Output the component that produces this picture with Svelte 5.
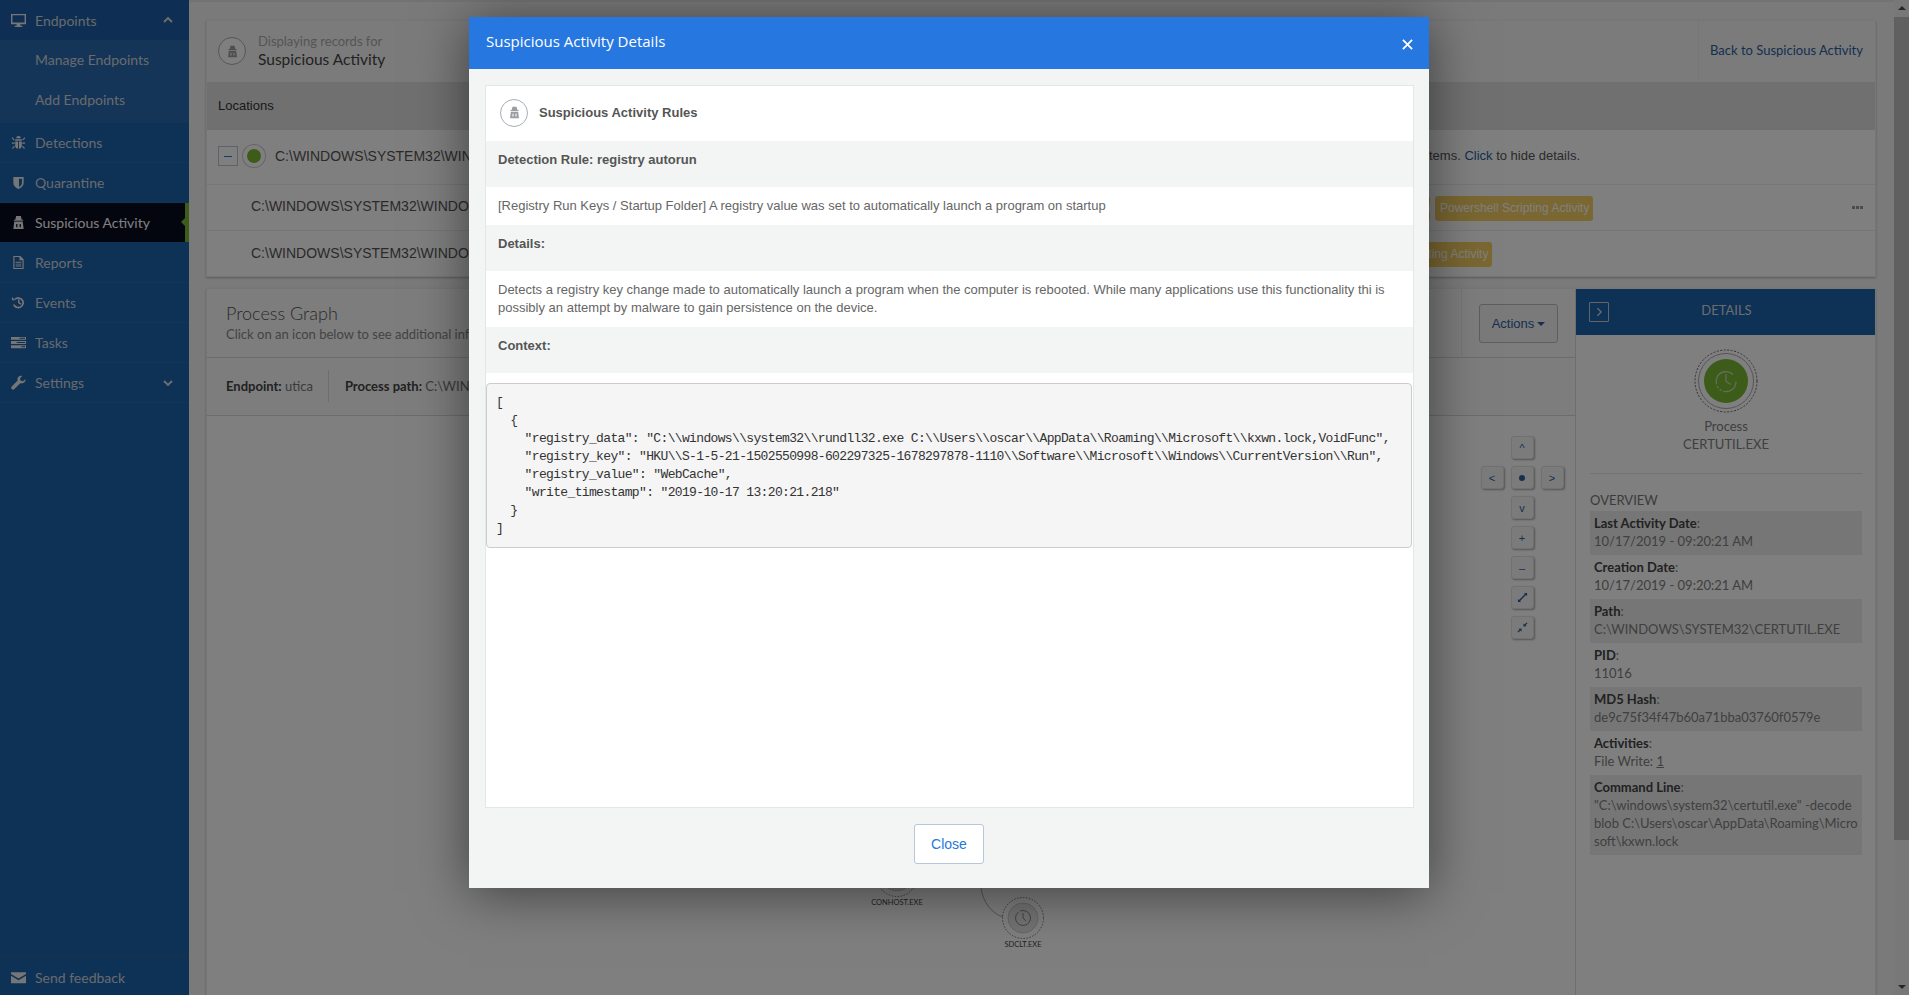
<script>
  const nav = [
    { label: 'Detections', icon: 'bug' },
    { label: 'Quarantine', icon: 'shield' },
    { label: 'Suspicious Activity', icon: 'spy', active: true },
    { label: 'Reports', icon: 'doc' },
    { label: 'Events', icon: 'history' },
    { label: 'Tasks', icon: 'tasks' },
    { label: 'Settings', icon: 'wrench', chevron: 'down' }
  ];

  const overview = [
    { label: 'Last Activity Date', value: '10/17/2019 - 09:20:21 AM' },
    { label: 'Creation Date', value: '10/17/2019 - 09:20:21 AM' },
    { label: 'Path', value: 'C:\\WINDOWS\\SYSTEM32\\CERTUTIL.EXE' },
    { label: 'PID', value: '11016' },
    { label: 'MD5 Hash', value: 'de9c75f34f47b60a71bba03760f0579e' },
    { label: 'Activities', value: 'File Write: ', count: '1' },
    { label: 'Command Line', value: '"C:\\windows\\system32\\certutil.exe" -decode blob C:\\Users\\oscar\\AppData\\Roaming\\Microsoft\\kxwn.lock' }
  ];

  const controls = [
    ['up'],
    ['left', 'center', 'right'],
    ['down'],
    ['plus'],
    ['minus'],
    ['expand'],
    ['compress']
  ];

  const context = `[
  {
    "registry_data": "C:\\\\windows\\\\system32\\\\rundll32.exe C:\\\\Users\\\\oscar\\\\AppData\\\\Roaming\\\\Microsoft\\\\kxwn.lock,VoidFunc",
    "registry_key": "HKU\\\\S-1-5-21-1502550998-602297325-1678297878-1110\\\\Software\\\\Microsoft\\\\Windows\\\\CurrentVersion\\\\Run",
    "registry_value": "WebCache",
    "write_timestamp": "2019-10-17 13:20:21.218"
  }
]`;
</script>

{#snippet icon(name)}
  <svg class="ico" viewBox="0 0 16 16" fill="currentColor" aria-hidden="true">
    {#if name === 'monitor'}
      <path fill-rule="evenodd" d="M0 1h16v11H10v1.500h2V15H4v-1.500h2V12H0zM1.500 2.500V10h13V2.500z" />
    {:else if name === 'bug'}
      <path d="M5.500 3.500a2.500 2.500 0 0 1 5 0zM4.500 4.500h7V6h-7zM4.500 7h3v7.500a3 3 0 0 1-3-3zM8.500 7h3v4.500a3 3 0 0 1-3 3zM1.500 2.500 4 5l-.8.8L.7 3.300zM14.500 2.500 12 5l.8.8 2.500-2.500zM1 8h3v1.200H1zM12 8h3v1.200h-3zM3.400 11.500l.8.8L2 15l-.9-.9zM12.600 11.500l-.8.8L14 15l.9-.9z" />
    {:else if name === 'shield'}
      <path fill-rule="evenodd" d="M2.500 2h11v6c0 3.500-2.300 5.800-5.500 7-3.200-1.200-5.500-3.500-5.500-7zM8.500 4v8.800c2-1 3.300-2.700 3.300-4.800V4z" />
    {:else if name === 'spy'}
      <path fill-rule="evenodd" d="M5.500 1h5l1 4h1.500v1.200H3V5h1.500zM3.500 7h9l1 8h-11zM5.500 9.500V13h1.300V9.500zM9.200 9.500V13h1.300V9.500z" />
    {:else if name === 'doc'}
      <path fill-rule="evenodd" d="M2.500 1H10l3.500 3.500V15h-11zM3.700 2.200v11.600h8.600V5.500H9V2.200zM5 7.200h6v1H5zM5 9.200h6v1H5zM5 11.200h6v1H5z" />
    {:else if name === 'history'}
      <path d="M1 2l3.500 3.500H1zM3.600 4a6 6 0 1 1-1.500 6h1.900a4.200 4.200 0 1 0 .9-4.700zM7.500 4.500H9v3.200l2.200 1.400-.8 1.200-2.900-1.800z" />
    {:else if name === 'tasks'}
      <path fill-rule="evenodd" d="M0 2h16v3H0zM0 6.500h16v3H0zM0 11h16v3H0zM9 3v1h6V3zM6 7.500v1h9v-1zM11 12v1h4v-1z" />
    {:else if name === 'wrench'}
      <path d="M15.500 4.200l-2.700 2.500-2.500-.7-.7-2.500L12 1c-2-.7-4.500.3-5 2.500-.2.900-.1 1.700.1 2.400L.8 12.200c-.8.800-.8 2 0 2.800.8.800 2 .8 2.800 0l6.300-6.300c.7.200 1.500.3 2.400.1 2.200-.5 3.300-2.600 3.200-4.600z" />
    {:else if name === 'mail'}
      <path d="M0 2.500h16v1.700L8 9 0 4.200zM0 6l8 4.800L16 6v8H0z" />
    {/if}
  </svg>
{/snippet}

{#snippet spyBadge()}
  <span class="badge">
    <svg viewBox="0 0 16 16" fill="currentColor" aria-hidden="true">
      <path fill-rule="evenodd" d="M5.500 1h5l1 4h1.500v1.200H3V5h1.500zM3.500 7h9l1 8h-11zM5.500 9.500V13h1.300V9.500zM9.200 9.500V13h1.300V9.500z" />
    </svg>
  </span>
{/snippet}

{#snippet graphNode(label)}
  <div class="node">
    <svg viewBox="0 0 44 44" width="44" height="44" fill="none" stroke="#777" aria-hidden="true">
      <circle cx="22" cy="22" r="20.500" stroke-dasharray="1.500 1.500" />
      <circle cx="22" cy="22" r="15" fill="#e6e6e6" stroke="#ccc" />
      <circle cx="22" cy="22" r="7.500" stroke="#888" stroke-dasharray="30 2" />
      <path d="M22 17v5l3 3" stroke="#888" />
    </svg>
    <span>{label}</span>
  </div>
{/snippet}

<div class="page">
  <aside class="sidebar">
    <div class="nav-item open">
      <span class="nav-icon">{@render icon('monitor')}</span>
      <span>Endpoints</span>
      <svg class="chev" viewBox="0 0 12 8" aria-hidden="true"><path d="M2 6l4-4 4 4" /></svg>
    </div>
    <div class="sub">
      <div>Manage Endpoints</div>
      <div>Add Endpoints</div>
    </div>
    {#each nav as item}
      <div class="nav-item" class:active={item.active}>
        <span class="nav-icon">{@render icon(item.icon)}</span>
        <span>{item.label}</span>
        {#if item.chevron}
          <svg class="chev" viewBox="0 0 12 8" aria-hidden="true"><path d="M2 2l4 4 4-4" /></svg>
        {/if}
      </div>
    {/each}
    <div class="feedback">
      <span class="nav-icon">{@render icon('mail')}</span>
      <span>Send feedback</span>
    </div>
  </aside>

  <main class="main">
    <section class="card records">
      <header class="records-head">
        <div class="records-title">
          {@render spyBadge()}
          <div>
            <div class="eyebrow">Displaying records for</div>
            <div class="headline">Suspicious Activity</div>
          </div>
        </div>
        <a class="back" href="#back">Back to Suspicious Activity</a>
      </header>
      <div class="locations-head">Locations</div>
      <div class="loc-row top">
        <span class="minus"></span>
        <span class="dot"></span>
        <span class="path">C:\WINDOWS\SYSTEM32\WINDOWSPOWERSHELL\V1.0\POWERSHELL.EXE</span>
        <span class="summary">2 items. <a href="#hide">Click</a> to hide details.</span>
      </div>
      <div class="loc-row mid">
        <span class="path">C:\WINDOWS\SYSTEM32\WINDOWSPOWERSHELL\V1.0\POWERSHELL.EXE</span>
        <span class="chip sliver">Data Staging</span>
        <span class="chip">Powershell Scripting Activity</span>
        <span class="more"></span>
      </div>
      <div class="loc-row last">
        <span class="path">C:\WINDOWS\SYSTEM32\WINDOWSPOWERSHELL\V1.0\POWERSHELL.EXE</span>
        <span class="chip short">Powershell Scripting Activity</span>
      </div>
    </section>

    <section class="card graph">
      <div class="graph-main">
        <div class="graph-head">
          <div>
            <h2>Process Graph</h2>
            <p>Click on an icon below to see additional information</p>
          </div>
          <div class="actions-cell"><button class="actions">Actions<i class="caret"></i></button></div>
        </div>
        <div class="graph-meta">
          <span class="meta-a"><b>Endpoint:</b> utica</span>
          <span class="meta-b"><b>Process path:</b> C:\WINDOWS\SYSTEM32\CERTUTIL.EXE</span>
        </div>
        <div class="canvas">
          <div class="controls">
            {#each controls as row}
              <div class="ctl-row">
                {#each row as c}
                  <button class="ctl">
                    {#if c === 'up'}^{:else if c === 'left'}&lt;{:else if c === 'right'}&gt;{:else if c === 'down'}v{:else if c === 'plus'}+{:else if c === 'minus'}–{:else if c === 'center'}<i class="ctl-dot"></i>
                    {:else if c === 'expand'}
                      <svg viewBox="0 0 12 12" width="11" height="11" fill="currentColor" aria-hidden="true"><path d="M7.500 1H11v3.500L9.800 3.300 3.300 9.800 4.500 11H1V7.500l1.200 1.200 6.500-6.500z" /></svg>
                    {:else}
                      <svg viewBox="0 0 12 12" width="11" height="11" fill="currentColor" aria-hidden="true"><path d="M11.500 1.300 9.300 3.500 10.500 4.700 7 5V1.500l1.200 1.200L10.500.5zM.5 10.700l2.200-2.200L1.500 7.300 5 7v3.500L3.800 9.300 1.500 11.500z" /></svg>
                    {/if}
                  </button>
                {/each}
              </div>
            {/each}
          </div>
          <div class="node-a">{@render graphNode('CONHOST.EXE')}</div>
          <svg class="edge" viewBox="0 0 30 40" width="30" height="40" fill="none" stroke="#aaa" aria-hidden="true">
            <path d="M1 0c2 14 10 25 22 29" />
          </svg>
          <div class="node-b">{@render graphNode('SDCLT.EXE')}</div>
        </div>
      </div>

      <aside class="details">
        <div class="details-head">
          <span class="toggle">
            <svg viewBox="0 0 8 12" width="7" height="10" fill="none" stroke="currentColor" stroke-width="1.500" aria-hidden="true"><path d="M1.500 1.500 6 6l-4.500 4.500" /></svg>
          </span>
          <span class="details-title">DETAILS</span>
        </div>
        <div class="details-body">
          <div class="process">
            <svg viewBox="0 0 64 64" width="64" height="64" fill="none" aria-hidden="true">
              <circle cx="32" cy="32" r="31" stroke="#666" stroke-dasharray="2 1.500" />
              <circle cx="32" cy="32" r="27.500" stroke="#aaa" />
              <circle cx="32" cy="32" r="22" fill="#7ab934" />
              <path d="M39 25.500a10 10 0 1 0 3 7" stroke="#c9dcb0" stroke-width="1.300" stroke-dasharray="26 2 2 2 2 2" />
              <path d="M32 25v7.500l5 3" stroke="#c9dcb0" stroke-width="1.300" />
            </svg>
            <div>Process</div>
            <div>CERTUTIL.EXE</div>
          </div>
          <h3>OVERVIEW</h3>
          <dl>
            {#each overview as row}
              <div class="ov-row">
                <dt><b>{row.label}</b>:</dt>
                <dd>{row.value}{#if row.count}<u>{row.count}</u>{/if}</dd>
              </div>
            {/each}
          </dl>
        </div>
      </aside>
    </section>
  </main>

  <div class="scrollbar">
    <span class="arrow up"></span>
    <span class="thumb"></span>
    <span class="arrow down"></span>
  </div>

  <div class="overlay"></div>

  <div class="modal">
    <header class="modal-head">
      <span>Suspicious Activity Details</span>
      <button class="close-x" aria-label="Close">
        <svg viewBox="0 0 12 12" width="11" height="11" stroke="#fff" stroke-width="2" aria-hidden="true"><path d="M1 1l10 10M11 1 1 11" /></svg>
      </button>
    </header>
    <div class="modal-body">
      <div class="rules">
        <div class="rules-title">
          {@render spyBadge()}
          <strong>Suspicious Activity Rules</strong>
        </div>
        <div class="label">Detection Rule: registry autorun</div>
        <div class="text one">[Registry Run Keys / Startup Folder] A registry value was set to automatically launch a program on startup</div>
        <div class="label">Details:</div>
        <div class="text">Detects a registry key change made to automatically launch a program when the computer is rebooted. While many applications use this functionality thi is possibly an attempt by malware to gain persistence on the device.</div>
        <div class="label">Context:</div>
        <div class="pre-wrap"><pre>{context}</pre></div>
      </div>
    </div>
    <footer class="modal-foot">
      <button class="close-btn">Close</button>
    </footer>
  </div>
</div>

<style>
  :global(body) {
    margin: 0;
    background: #f4f5f5;
  }

  .page {
    position: relative;
    display: flex;
    height: 995px;
    overflow: hidden;
    font-family: Lato, "Open Sans", sans-serif;
    color: #666;
    font-size: 14px;
  }

  /* sidebar */
  .sidebar {
    width: 189px;
    flex: none;
    display: flex;
    flex-direction: column;
    background: #1d62ad;
    color: #d0d5db;
  }

  .nav-item {
    height: 40px;
    flex: none;
    box-sizing: border-box;
    display: flex;
    align-items: center;
    padding-right: 15px;
    border-bottom: 1px solid #2469b4;
    font-size: 14px;
  }

  .nav-item.open {
    background: #1c5ea6;
    border-bottom: 0;
  }

  .nav-item.active {
    height: 39px;
    margin-bottom: 1px;
    border-bottom: 0;
    background: #070a1e;
    color: #fff;
    position: relative;
    border-right: 4px solid #7ab934;
  }

  .nav-item.active::after {
    content: '';
    position: absolute;
    right: 0;
    top: 15px;
    border: 4px solid transparent;
    border-right-color: #7ab934;
  }

  .nav-icon {
    width: 35px;
    display: flex;
    justify-content: center;
    padding-left: 1px;
    box-sizing: border-box;
  }

  .ico {
    width: 15px;
    height: 15px;
    display: block;
    color: #ececec;
  }

  .chev {
    width: 12px;
    height: 8px;
    margin-left: auto;
    fill: none;
    stroke: #dcdfe3;
    stroke-width: 1.800;
  }

  .sub {
    background: #286ab0;
    height: 83px;
    flex: none;
    display: flex;
    flex-direction: column;
    padding-left: 35px;
  }

  .sub div {
    height: 40px;
    line-height: 40px;
  }

  .feedback {
    margin-top: auto;
    height: 40px;
    box-sizing: border-box;
    border-top: 3px solid #24659f;
    padding-top: 2px;
    display: flex;
    align-items: center;
    flex: none;
  }

  /* main content behind the modal */
  .main {
    flex: 1;
    min-width: 0;
    padding: 18px 18px 0 17px;
    display: flex;
    flex-direction: column;
    gap: 11px;
    border-top: 2px solid #e6e6e6;
    box-sizing: border-box;
  }

  .card {
    background: #fff;
    box-shadow: 0 1px 2px rgba(0, 0, 0, 0.25);
    border: 1px solid #ececec;
    box-sizing: border-box;
  }

  .records {
    height: 257px;
    flex: none;
    display: flex;
    flex-direction: column;
    font-family: "Liberation Sans", Arial, sans-serif;
  }

  .records-head {
    height: 61px;
    flex: none;
    display: flex;
    justify-content: space-between;
    background: #f7f7f7;
  }

  .records-title {
    display: flex;
    align-items: center;
    gap: 12px;
    padding: 0 0 1px 11px;
    font-family: Lato, sans-serif;
  }

  .eyebrow {
    font-size: 13px;
    color: #aaa;
    line-height: 17px;
  }

  .headline {
    font-size: 15.500px;
    color: #444;
    line-height: 19px;
  }

  .back {
    width: 177px;
    box-sizing: border-box;
    border-left: 1px solid #ececec;
    padding: 21px 0 0 11px;
    color: #2a5f9e;
    font-size: 13px;
    text-decoration: none;
    font-family: Lato, sans-serif;
  }

  .badge {
    width: 28px;
    height: 28px;
    box-sizing: border-box;
    flex: none;
    border: 1px solid #a9adb3;
    border-radius: 50%;
    display: flex;
    align-items: center;
    justify-content: center;
    color: #9a9ea3;
    background: #fff;
  }

  .badge svg {
    width: 13px;
    height: 13px;
  }

  .locations-head {
    height: 48px;
    flex: none;
    line-height: 48px;
    padding-left: 11px;
    background: #e0e0e0;
    color: #333;
    font-size: 13px;
  }

  .loc-row {
    flex: none;
    height: 45px;
    box-sizing: border-box;
    display: flex;
    align-items: center;
    padding: 0 0 2px 44px;
    border-bottom: 1px solid #ececec;
    white-space: nowrap;
    color: #555;
    min-width: 0;
  }

  .loc-row.last {
    border-bottom: 0;
  }

  .loc-row.mid {
    height: 46px;
    padding-bottom: 3px;
  }

  .loc-row.top {
    height: 55px;
    padding: 0 0 3px 11px;
  }

  .minus {
    width: 18px;
    height: 18px;
    flex: none;
    border: 1px solid #b9c6d6;
    position: relative;
    margin-right: 5px;
  }

  .minus::after {
    content: '';
    position: absolute;
    left: 5px;
    right: 5px;
    top: 9px;
    height: 1px;
    background: #2777e0;
  }

  .dot {
    width: 14px;
    height: 14px;
    background: #7ab934;
    border-radius: 50%;
    border: 4px solid #fff;
    box-shadow: 0 0 0 1px #ccc;
    margin-right: 10px;
    flex: none;
  }

  .path {
    flex: 1;
    min-width: 0;
    overflow: hidden;
  }

  .summary {
    flex: none;
    margin-right: 295px;
    font-size: 13px;
  }

  .summary a {
    color: #2a5f9e;
    text-decoration: none;
  }

  .chip {
    flex: none;
    height: 25px;
    width: 158px;
    margin-top: 4px;
    box-sizing: border-box;
    padding-left: 5px;
    background: #f5cf62;
    color: #fff;
    border-radius: 3px;
    font-size: 12px;
    line-height: 24px;
    overflow: hidden;
  }

  .chip.sliver {
    width: 60px;
    margin-right: 5px;
  }

  .chip.short {
    margin-right: 383px;
  }

  .more {
    flex: none;
    width: 11px;
    height: 3px;
    margin: 2px 12px 0 259px;
    background: repeating-linear-gradient(90deg, #999 0 3px, transparent 3px 4px);
  }

  .graph {
    flex: 1;
    display: flex;
    min-height: 0;
    background: #fff;
    border-bottom: 0;
  }

  .graph-main {
    flex: 1;
    min-width: 0;
    display: flex;
    flex-direction: column;
    background: #fff;
  }

  .graph-head {
    height: 69px;
    flex: none;
    box-sizing: border-box;
    display: flex;
    justify-content: space-between;
    padding-left: 19px;
    border-bottom: 1px solid #d8d8d8;
    background: #fafafa;
  }

  h2 {
    margin: 12px 0 0;
    font-weight: 300;
    font-size: 18px;
    line-height: 24px;
    color: #555;
  }

  .graph-head p {
    margin: 1px 0 0;
    font-size: 13px;
    color: #888;
  }

  .actions-cell {
    width: 114px;
    border-left: 1px solid #ececec;
    box-sizing: border-box;
    padding: 15px 0 0 17px;
  }

  .actions {
    width: 79px;
    height: 39px;
    background: #f5f5f5;
    border: 1px solid #b9bdc2;
    border-radius: 3px;
    color: #2a5f9e;
    font: 13px "Liberation Sans", Arial, sans-serif;
    padding: 0;
  }

  .caret {
    display: inline-block;
    border: 4px solid transparent;
    border-top-color: #2a5f9e;
    border-bottom: 0;
    margin-left: 3px;
    vertical-align: 2px;
  }

  .graph-meta {
    height: 58px;
    flex: none;
    box-sizing: border-box;
    display: flex;
    align-items: center;
    padding: 0 0 2px 19px;
    border-bottom: 1px solid #d8d8d8;
    font-size: 13px;
    color: #777;
    white-space: nowrap;
    overflow: hidden;
    background: #fafafa;
  }

  .graph-meta b {
    color: #444;
  }

  .meta-a {
    padding-right: 15px;
    border-right: 1px solid #ddd;
    line-height: 32px;
  }

  .meta-b {
    padding-left: 16px;
  }

  .canvas {
    flex: 1;
    position: relative;
    min-height: 0;
  }

  .controls {
    position: absolute;
    right: 12px;
    top: 20px;
    display: flex;
    flex-direction: column;
    gap: 7px;
    align-items: center;
    width: 82px;
  }

  .ctl-row {
    display: flex;
    gap: 7px;
  }

  .ctl {
    width: 23px;
    height: 23px;
    padding: 0;
    display: flex;
    align-items: center;
    justify-content: center;
    background: #f7f7f7;
    border: 1px solid #e2e2e2;
    border-radius: 3px;
    box-shadow: 1px 1px 2px rgba(0, 0, 0, 0.35);
    color: #2a5f9e;
    font: 11px "Liberation Sans", Arial, sans-serif;
  }

  .ctl-dot {
    width: 6px;
    height: 6px;
    background: #2a5f9e;
    border-radius: 50%;
  }

  .node {
    display: flex;
    flex-direction: column;
    align-items: center;
    width: 44px;
    font: 7.500px Lato, sans-serif;
    color: #444;
    white-space: nowrap;
  }

  .node-a {
    position: absolute;
    left: 668px;
    top: 438px;
  }

  .node-b {
    position: absolute;
    left: 794px;
    top: 480px;
  }

  .edge {
    position: absolute;
    left: 773px;
    top: 472px;
  }

  .details {
    width: 300px;
    flex: none;
    box-sizing: border-box;
    border-left: 1px solid #ddd;
    background: #fff;
    display: flex;
    flex-direction: column;
  }

  .details-head {
    height: 46px;
    flex: none;
    background: #1d62ad;
    display: flex;
    align-items: center;
    position: relative;
    padding-left: 13px;
    color: #d5d9de;
    font-size: 13px;
  }

  .toggle {
    width: 18px;
    height: 18px;
    border: 1px solid #c3cbd5;
    border-radius: 1px;
    display: flex;
    align-items: center;
    justify-content: center;
  }

  .details-title {
    position: absolute;
    left: 0;
    right: 0;
    text-align: center;
    top: 13px;
    padding-left: 2px;
  }

  .details-body {
    padding: 0 13px 0 14px;
    font-size: 13px;
    color: #808080;
  }

  .process {
    margin-top: 14px;
    padding-bottom: 20px;
    border-bottom: 1px solid #e5e5e5;
    text-align: center;
    line-height: 18px;
  }

  .process svg {
    display: block;
    margin: 0 auto 4px;
  }

  h3 {
    margin: 17px 0 2px;
    font-weight: 400;
    font-size: 13px;
    line-height: 18px;
    color: #777;
  }

  dl {
    margin: 0;
  }

  .ov-row {
    padding: 3px 4px 5px;
    line-height: 18px;
    word-break: break-all;
  }

  .ov-row:nth-child(odd) {
    background: #ecedee;
  }

  dt b {
    color: #444;
  }

  dd {
    margin: 0;
  }

  /* browser scrollbar */
  .scrollbar {
    width: 15px;
    flex: none;
    background: #f1f1f1;
    display: flex;
    flex-direction: column;
    align-items: center;
  }

  .thumb {
    align-self: stretch;
    height: 823px;
    background: #c1c1c1;
  }

  .arrow {
    border: 4px solid transparent;
    flex: none;
  }

  .arrow.up {
    border-bottom: 4px solid #505050;
    border-top: 0;
    margin: 6px 0 7px;
  }

  .arrow.down {
    border-top: 4px solid #505050;
    border-bottom: 0;
    margin: auto 0 6px;
  }

  /* dialog */
  .overlay {
    position: absolute;
    inset: 0;
    background: rgba(0, 0, 0, 0.5);
  }

  .modal {
    position: absolute;
    left: 469px;
    top: 17px;
    width: 960px;
    height: 871px;
    display: flex;
    flex-direction: column;
    background: #f3f5f4;
    box-shadow: 0 5px 50px rgba(0, 0, 0, 0.5);
    font-family: "Liberation Sans", Arial, sans-serif;
  }

  .modal-head {
    height: 52px;
    flex: none;
    box-sizing: border-box;
    display: flex;
    align-items: center;
    justify-content: space-between;
    padding: 0 16px 4px 17px;
    background: #2777e0;
    color: #fff;
    font: 15px "Open Sans", sans-serif;
  }

  .close-x {
    background: none;
    border: 0;
    padding: 0;
    display: flex;
    margin: 6px 0 0 0;
  }

  .modal-body {
    flex: 1;
    min-height: 0;
    padding: 16px 15px 0 16px;
    display: flex;
  }

  .rules {
    flex: 1;
    background: #fff;
    border: 1px solid #e5e7e7;
    font-size: 13px;
    color: #666;
    min-width: 0;
  }

  .rules-title {
    height: 55px;
    box-sizing: border-box;
    padding: 0 0 2px 14px;
    display: flex;
    align-items: center;
    gap: 11px;
    color: #555;
  }

  .label {
    height: 46px;
    box-sizing: border-box;
    padding: 10px 12px 0;
    background: #f3f5f4;
    font-weight: 700;
    color: #555;
    line-height: 18px;
  }

  .text {
    padding: 10px 12px;
    line-height: 18px;
  }

  .text.one {
    height: 38px;
    box-sizing: border-box;
  }

  .pre-wrap {
    padding: 10px 1px 0 0;
  }

  pre {
    margin: 0;
    padding: 10px 9px;
    background: #f5f5f5;
    border: 1px solid #ccc;
    border-radius: 4px;
    font: 13px/18px "Liberation Mono", monospace;
    letter-spacing: -0.650px;
    color: #333;
    height: 143px;
    overflow: hidden;
  }

  .modal-foot {
    height: 80px;
    flex: none;
    display: flex;
    justify-content: center;
    padding-top: 16px;
    box-sizing: border-box;
  }

  .close-btn {
    width: 70px;
    height: 40px;
    background: #fff;
    border: 1px solid #b7c6d8;
    border-radius: 3px;
    color: #2777e0;
    font: 14px "Liberation Sans", Arial, sans-serif;
    padding: 0;
  }
</style>
